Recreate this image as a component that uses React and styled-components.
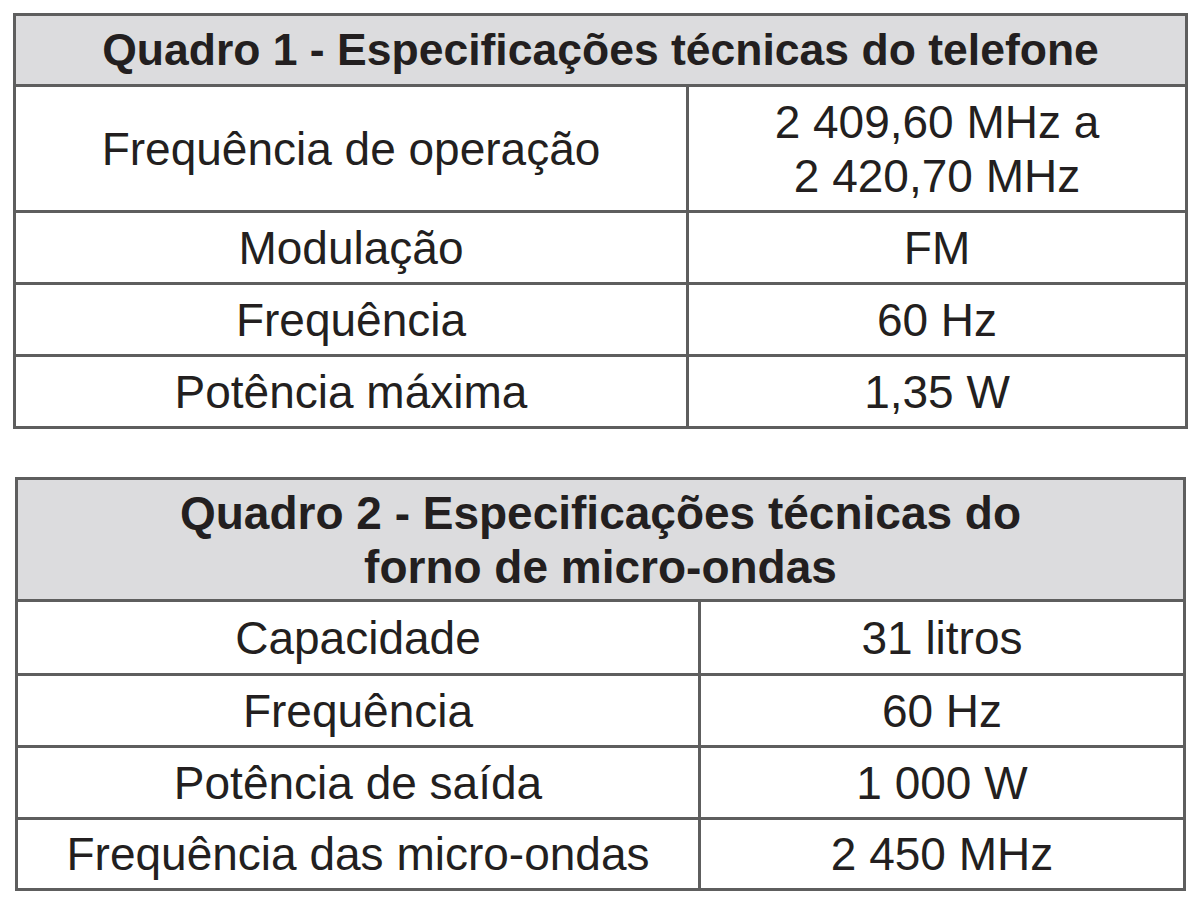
import React from 'react'
import styled, { createGlobalStyle } from 'styled-components'

const GlobalStyle = createGlobalStyle`
  body {
    margin: 0;
    background: #ffffff;
    font-family: "Liberation Sans", Arial, sans-serif;
    color: #231f20;
  }
`

const Page = styled.main`
  padding-top: 13px;
  display: flex;
  flex-direction: column;
  gap: 48px;
`

const Table = styled.section`
  display: grid;
  grid-template-columns: ${p => p.$cols};
  grid-template-rows: ${p => p.$rows};
  gap: 3px;
  width: ${p => p.$width}px;
  margin-left: ${p => p.$left}px;
  border: 3px solid #5e5e5e;
  background: #5e5e5e;
  box-sizing: border-box;
`

const Header = styled.div`
  grid-column: 1 / -1;
  background: #dcdcde;
  display: flex;
  align-items: center;
  justify-content: center;
  text-align: center;
  font-weight: bold;
  font-size: ${p => p.$size}px;
  line-height: 54px;
`

const Cell = styled.div`
  background: #ffffff;
  display: flex;
  align-items: center;
  justify-content: center;
  text-align: center;
  font-size: 46px;
  line-height: 54px;
`

const quadro1 = [
  ['Frequência de operação', <>2 409,60 MHz a<br />2 420,70 MHz</>],
  ['Modulação', 'FM'],
  ['Frequência', '60 Hz'],
  ['Potência máxima', '1,35 W'],
]

const quadro2 = [
  ['Capacidade', '31 litros'],
  ['Frequência', '60 Hz'],
  ['Potência de saída', '1 000 W'],
  ['Frequência das micro-ondas', '2 450 MHz'],
]

const Rows = ({ data }) =>
  data.map(([label, value], i) => (
    <React.Fragment key={i}>
      <Cell>{label}</Cell>
      <Cell>{value}</Cell>
    </React.Fragment>
  ))

const App = () => (
  <>
    <GlobalStyle />
    <Page>
      <Table $width={1175} $left={13} $cols="670px 496px" $rows="68px 123px 69px 69px 69px">
        <Header $size={44.5}>Quadro 1 - Especificações técnicas do telefone</Header>
        <Rows data={quadro1} />
      </Table>
      <Table $width={1171} $left={15} $cols="680px 482px" $rows="119px 71px 69px 69px 68px">
        <Header $size={46}>Quadro 2 - Especificações técnicas do<br />forno de micro-ondas</Header>
        <Rows data={quadro2} />
      </Table>
    </Page>
  </>
)

export default App
